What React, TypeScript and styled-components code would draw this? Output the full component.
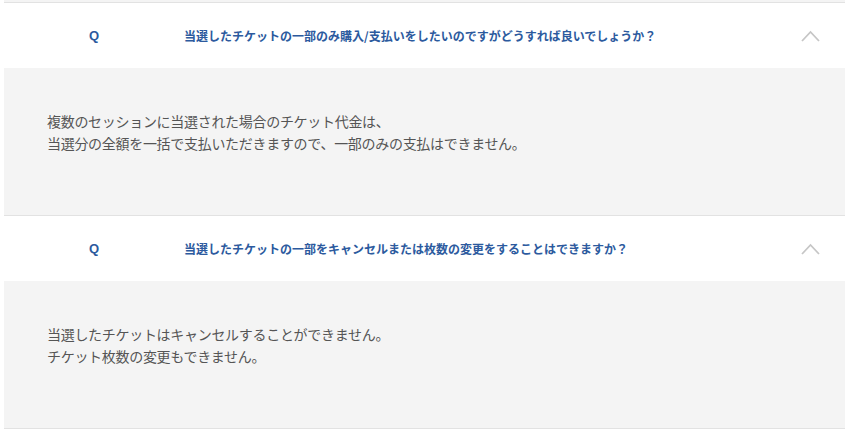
import styled, { createGlobalStyle } from "styled-components";

const GlobalStyle = createGlobalStyle`
  html, body {
    margin: 0;
    padding: 0;
    background: #ffffff;
  }
  body {
    font-family: "Liberation Sans", "Noto Sans CJK JP", sans-serif;
  }
`;

const color = {
  blue: "#2c5a9e",
  text: "#555555",
  panel: "#f4f4f4",
  line: "#e2e2e2",
  chevron: "#c6c6c6",
};

const FaqList = styled.div`
  display: flex;
  flex-direction: column;
  margin: 0 5px 0 4px;
`;

const PrevTail = styled.div`
  height: 2px;
  background-color: ${color.panel};
  border-bottom: 1px solid ${color.line};
`;

const FaqItem = styled.section`
  display: flex;
  flex-direction: column;
  border-bottom: 1px solid ${color.line};
`;

const Question = styled.div`
  display: flex;
  align-items: center;
  height: 65px;
  background-color: #ffffff;
`;

const QMark = styled.span`
  width: 180px;
  flex-shrink: 0;
  text-align: center;
  font-size: 13px;
  font-weight: 700;
  color: ${color.blue};
`;

const QuestionText = styled.h3`
  flex: 1;
  margin: 0;
  font-family: "Noto Sans CJK JP", sans-serif;
  font-size: 12px;
  font-weight: 700;
  color: ${color.blue};
`;

const Toggle = styled.span`
  width: 70px;
  flex-shrink: 0;
  display: flex;
  justify-content: center;
  align-items: center;
`;

const Answer = styled.div`
  height: 147px;
  box-sizing: border-box;
  padding: 42px 0 0 43px;
  background-color: ${color.panel};
  font-family: "Noto Sans CJK JP", sans-serif;
  font-size: 14px;
  line-height: 22px;
  letter-spacing: -0.3px;
  color: ${color.text};

  p {
    margin: 0;
  }
`;

const Chevron = () => (
  <svg width="19" height="12" viewBox="0 0 19 12">
    <polyline
      points="1,11 9.5,2 18,11"
      fill="none"
      stroke={color.chevron}
      strokeWidth="1.8"
    />
  </svg>
);

const faqs = [
  {
    q: "当選したチケットの一部のみ購入/支払いをしたいのですがどうすれば良いでしょうか？",
    a: [
      "複数のセッションに当選された場合のチケット代金は、",
      "当選分の全額を一括で支払いただきますので、一部のみの支払はできません。",
    ],
  },
  {
    q: "当選したチケットの一部をキャンセルまたは枚数の変更をすることはできますか？",
    a: ["当選したチケットはキャンセルすることができません。", "チケット枚数の変更もできません。"],
  },
];

const App = () => {
  return (
    <>
      <GlobalStyle />
      <FaqList>
        <PrevTail />
        {faqs.map((item) => (
          <FaqItem key={item.q}>
            <Question>
              <QMark>Q</QMark>
              <QuestionText>{item.q}</QuestionText>
              <Toggle>
                <Chevron />
              </Toggle>
            </Question>
            <Answer>
              {item.a.map((line) => (
                <p key={line}>{line}</p>
              ))}
            </Answer>
          </FaqItem>
        ))}
      </FaqList>
    </>
  );
};

export default App;
